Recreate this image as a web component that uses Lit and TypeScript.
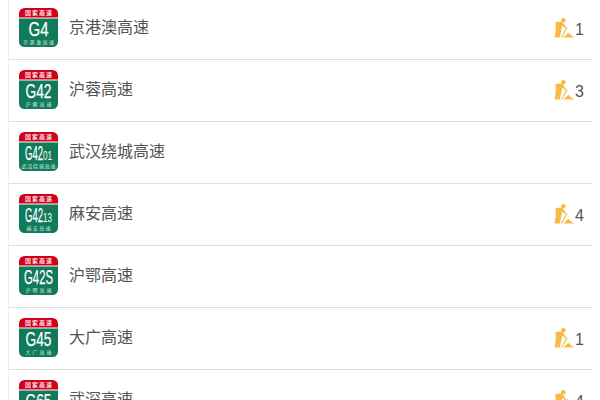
import { LitElement, html, css, svg } from "lit";
import { customElement } from "lit/decorators.js";

type Road = { big: string; small?: string; sub: string; name: string; n?: number; subLen: number; bigLen: number };
const roads: Road[] = [
  { big: "G4", sub: "京港澳高速", name: "京港澳高速", n: 1, subLen: 31, bigLen: 20 },
  { big: "G42", sub: "沪蓉高速", name: "沪蓉高速", n: 3, subLen: 26, bigLen: 26 },
  { big: "G42", small: "01", sub: "武汉绕城高速", name: "武汉绕城高速", subLen: 34, bigLen: 18 },
  { big: "G42", small: "13", sub: "麻安高速", name: "麻安高速", n: 4, subLen: 24, bigLen: 18 },
  { big: "G42S", sub: "沪鄂高速", name: "沪鄂高速", subLen: 26, bigLen: 29 },
  { big: "G45", sub: "大广高速", name: "大广高速", n: 1, subLen: 26, bigLen: 26 },
  { big: "G65", sub: "武深高速", name: "武深高速", n: 4, subLen: 26, bigLen: 26 },
];

const worker = svg`<circle cx="9.8" cy="2.4" r="2.4"/>
<path d="M1.6 4.2 7.8 3.6 10 5.4 12.8 9.6 11.7 10.8 8.6 8 7.6 13 6.2 20.4H.6L1.8 13.2z"/>
<path d="M7.2 20.4 13.4 9.4 14.5 10 8.6 20.4z"/>
<path d="M10 20.4 15 15.6 20.8 20.4z"/>`;

@customElement("road-badge")
class RoadBadge extends LitElement {
  static properties = { road: { attribute: false } };
  road!: Road;
  static styles = css`
    :host { display: block; width: 39px; height: 39px; flex: none; }
    svg { display: block; }
    .t { font-family: "Liberation Sans", "Noto Sans CJK SC", sans-serif; fill: #fff; }
    .cjk { font-family: "Noto Sans CJK SC", sans-serif; }
    .big { font-size: 21px; stroke: #fff; stroke-width: 0.25px; }
    .small { font-size: 12px; }
    .head { font-size: 6px; font-weight: 500; }
    .sub { font-size: 5px; fill: #d8ebe3; }
  `;
  render() {
    const r = this.road;
    const bigX = r.small ? 19.5 - (r.bigLen + 9) / 2 : 19.5 - r.bigLen / 2;
    return html`<svg width="39" height="39" viewBox="0 0 39 39">
      <path fill="#117a5a" d="M0 10.5h39v23a5.5 5.5 0 0 1-5.5 5.5H5.5A5.5 5.5 0 0 1 0 33.5z"/>
      <path fill="#d0021b" d="M5.5 0h28A5.5 5.5 0 0 1 39 5.5v4H0v-4A5.5 5.5 0 0 1 5.5 0z"/>
      <text class="t cjk head" x="19.5" y="7.3" text-anchor="middle" textLength="27" lengthAdjust="spacing">国家高速</text>
      <text class="t big" x=${bigX} y="28" textLength=${r.bigLen} lengthAdjust="spacingAndGlyphs">${r.big}</text>
      ${r.small ? svg`<text class="t small" x=${bigX + r.bigLen} y="28" textLength="9" lengthAdjust="spacingAndGlyphs">${r.small}</text>` : ""}
      <text class="t cjk sub" x="19.5" y="36" text-anchor="middle" textLength=${r.subLen} lengthAdjust="spacing">${r.sub}</text>
    </svg>`;
  }
}

@customElement("app-root")
class AppRoot extends LitElement {
  static styles = css`
    :host { display: block; width: 600px; height: 400px; overflow: hidden; background: #fff; font-family: "Liberation Sans", "Noto Sans CJK SC", sans-serif; }
    .list { margin: 0 8px; border-left: 1px solid #eee; }
    .row { display: flex; align-items: center; padding: 10px 8px 12px 10px; border-bottom: 1px solid #ddd; }
    .row:first-child { padding-top: 8px; }
    .name { margin-left: 11px; flex: 1; font-size: 16px; color: #555; padding-bottom: 3px; }
    .work { display: flex; align-items: center; color: #555; font-size: 16px; }
    .work svg { display: block; fill: #f6bb45; }
    .work span { margin-left: 1px; padding-top: 4px; }
  `;
  render() {
    return html`<div class="list">
      ${roads.map(r => html`<div class="row">
        <road-badge .road=${r}></road-badge>
        <div class="name">${r.name}</div>
        ${r.n ? html`<div class="work"><svg width="20" height="20" viewBox="0 0 21 21">${worker}</svg><span>${r.n}</span></div>` : ""}
      </div>`)}
    </div>`;
  }
}
